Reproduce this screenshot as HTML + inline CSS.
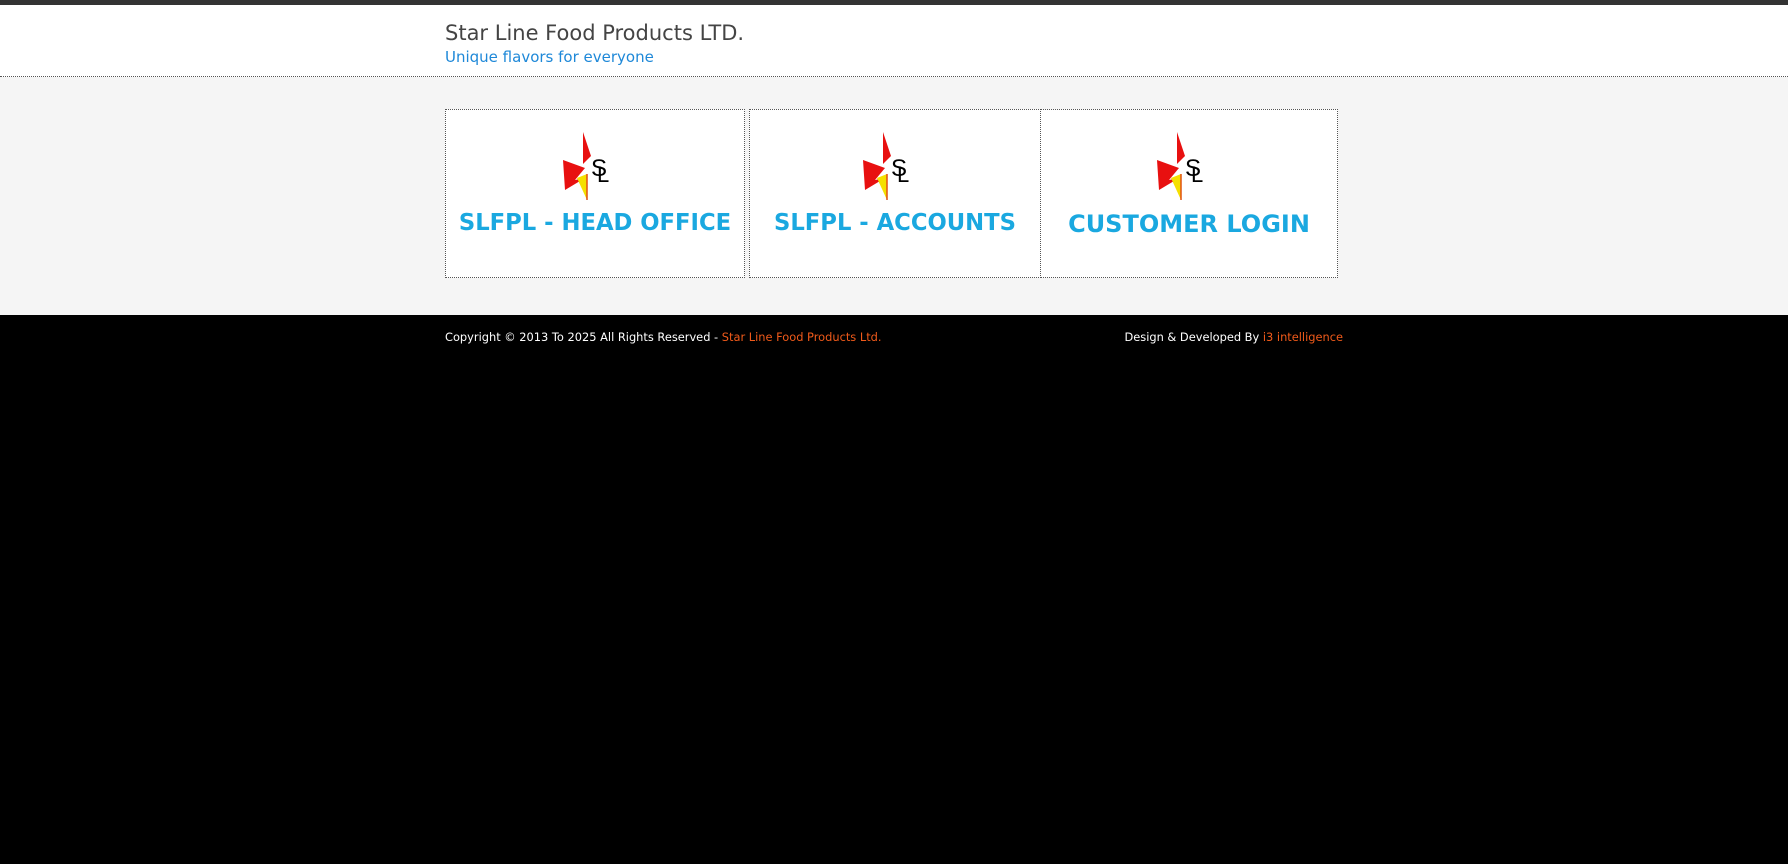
<!DOCTYPE html>
<html><head><meta charset="utf-8"><style>
body{margin:0;background:#000;font-family:"DejaVu Sans","Liberation Sans",sans-serif;width:1788px;height:864px;overflow:hidden}
.top{height:5px;background:#333}
.hdr{background:#fff;height:71px;border-bottom:1px dotted #555;position:relative}
.t1{position:absolute;left:445px;top:16px;font-size:21px;color:#444}
.t2{position:absolute;left:445px;top:43px;font-size:15px;color:#1e88d8}
.gray{background:#f5f5f5;height:238px;position:relative}
.box{position:absolute;top:32px;height:169px;background:#fff;border:1px dotted #555;box-sizing:border-box}
.box svg{position:absolute;top:22px;left:50%;margin-left:-34px}
.lbl{position:absolute;top:100px;left:0;right:0;text-align:center;font-weight:bold;color:#1aa8e0;font-size:22.7px}
.ft{position:relative;height:40px;color:#fff;font-size:11.4px}
.ft span{color:#f05a1a}
</style></head><body>
<div class="top"></div>
<div class="hdr"><div class="t1">Star Line Food Products LTD.</div><div class="t2">Unique flavors for everyone</div></div>
<div class="gray">
<div class="box" style="left:445px;width:300px"><svg width="60" height="70" viewBox="0 0 60 70"><polygon points="22,0 30,24 22,32" fill="#e81010"/><polygon points="2,28 24,36 14,48 24,46 4,58" fill="#e81010"/><polygon points="16,46 26,42 26,68" fill="#f5e000"/><line x1="26" y1="42" x2="26" y2="68" stroke="#e05010" stroke-width="1.5"/><text x="30" y="44" font-family="Liberation Sans,sans-serif" font-size="24" fill="#000">S</text><text x="36" y="50" font-family="Liberation Sans,sans-serif" font-size="22" fill="#000">L</text></svg><div class="lbl">SLFPL - HEAD OFFICE</div></div>
<div class="box" style="left:749px;width:292px"><svg width="60" height="70" viewBox="0 0 60 70"><polygon points="22,0 30,24 22,32" fill="#e81010"/><polygon points="2,28 24,36 14,48 24,46 4,58" fill="#e81010"/><polygon points="16,46 26,42 26,68" fill="#f5e000"/><line x1="26" y1="42" x2="26" y2="68" stroke="#e05010" stroke-width="1.5"/><text x="30" y="44" font-family="Liberation Sans,sans-serif" font-size="24" fill="#000">S</text><text x="36" y="50" font-family="Liberation Sans,sans-serif" font-size="22" fill="#000">L</text></svg><div class="lbl">SLFPL - ACCOUNTS</div></div>
<div class="box" style="left:1040px;width:298px"><svg width="60" height="70" viewBox="0 0 60 70"><polygon points="22,0 30,24 22,32" fill="#e81010"/><polygon points="2,28 24,36 14,48 24,46 4,58" fill="#e81010"/><polygon points="16,46 26,42 26,68" fill="#f5e000"/><line x1="26" y1="42" x2="26" y2="68" stroke="#e05010" stroke-width="1.5"/><text x="30" y="44" font-family="Liberation Sans,sans-serif" font-size="24" fill="#000">S</text><text x="36" y="50" font-family="Liberation Sans,sans-serif" font-size="22" fill="#000">L</text></svg><div class="lbl" style="font-size:24px">CUSTOMER LOGIN</div></div>
</div>
<div class="ft"><div style="position:absolute;left:445px;top:15px">Copyright © 2013 To 2025 All Rights Reserved - <span>Star Line Food Products Ltd.</span></div><div style="position:absolute;right:445px;top:15px">Design &amp; Developed By <span>i3 intelligence</span></div></div>
</body></html>
